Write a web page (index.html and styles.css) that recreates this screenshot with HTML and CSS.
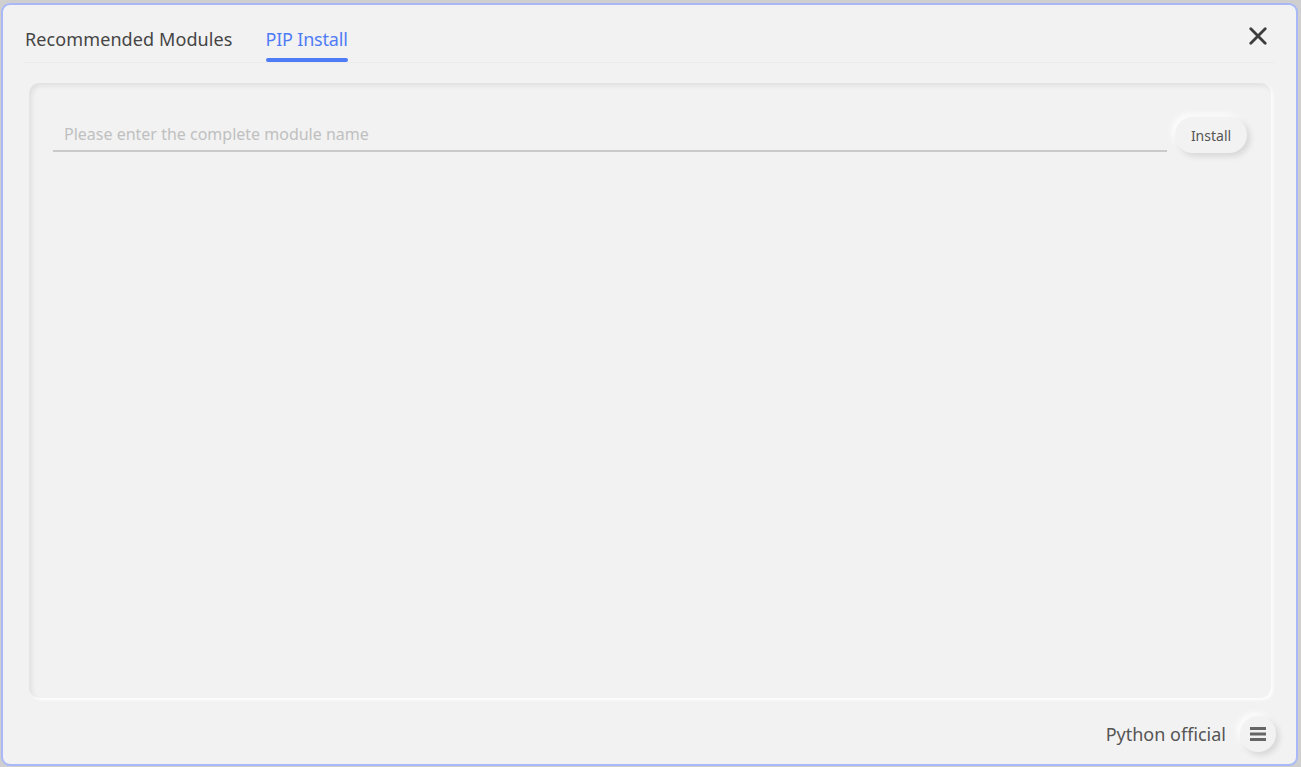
FILE: index.html
```html
<!DOCTYPE html>
<html lang="en">
<head>
    <meta charset="UTF-8">
    <meta name="viewport" content="width=device-width, initial-scale=1.0">
    <title>Module Manager</title>
    <link rel="stylesheet" href="styles.css">
</head>
<body>
    <div class="dialog">
        <header class="tabBar">
            <nav class="tabs">
                <a class="tab">Recommended Modules</a>
                <a class="tab active">PIP Install</a>
            </nav>
            <button class="closeBtn" title="Close">
                <svg width="18" height="18" viewBox="0 0 18 18">
                    <path d="M1.8 1.8 L16.2 16.2 M16.2 1.8 L1.8 16.2" stroke="#3d3d3d" stroke-width="2.8" stroke-linecap="round"/>
                </svg>
            </button>
        </header>

        <section class="panel">
            <div class="installRow">
                <input class="moduleInput" type="text" placeholder="Please enter the complete module name">
                <button class="installBtn">Install</button>
            </div>
        </section>

        <footer class="footer">
            <span class="source">Python official</span>
            <button class="menuBtn" title="Source">
                <svg width="16" height="14" viewBox="0 0 16 14">
                    <rect x="0" y="0" width="16" height="3" fill="#666"/>
                    <rect x="0" y="5.5" width="16" height="3" fill="#666"/>
                    <rect x="0" y="11" width="16" height="3" fill="#666"/>
                </svg>
            </button>
        </footer>
    </div>
</body>
</html>
```

FILE: styles.css
```css
* {
    box-sizing: border-box;
    font-family: "Noto Sans", "Open Sans", sans-serif;
}
body {
    margin: 0;
    background: #cfcfcf;
    height: 767px;
    padding: 3px 3px 1px 1px;
}
.dialog {
    height: 100%;
    background: #f2f2f2;
    border: 2px solid #a9b9f8;
    border-radius: 9px;
    display: flex;
    flex-direction: column;
    padding: 0 21px 0 22px;
}
.tabBar {
    display: flex;
    align-items: flex-start;
    justify-content: space-between;
    border-bottom: 1px solid #ebebeb;
    height: 58px;
}
.tabs {
    display: flex;
    gap: 33px;
    padding-top: 21px;
}
.tab {
    font-size: 18px;
    color: #454545;
    line-height: 26px;
    padding-bottom: 6px;
    position: relative;
    cursor: pointer;
    letter-spacing: 0.1px;
}
.tab.active {
    color: #4f7cf6;
    letter-spacing: -0.2px;
}
.tab.active::after {
    content: "";
    position: absolute;
    left: 0;
    right: 0;
    bottom: -4px;
    height: 4px;
    border-radius: 2px;
    background: #4f7cf6;
}
.closeBtn {
    border: none;
    background: none;
    padding: 0;
    margin-top: 22px;
    margin-right: 8px;
    cursor: pointer;
}
.panel {
    flex: 1;
    margin: 20px 4px 0 4px;
    border-radius: 10px;
    background: #f2f2f2;
    box-shadow: inset 3px 3px 5px rgba(0, 0, 0, 0.07), 2px 2px 3px rgba(255, 255, 255, 0.9);
    padding: 34px 24px 0 24px;
}
.installRow {
    display: flex;
    align-items: flex-end;
    gap: 8px;
}
.moduleInput {
    flex: 1;
    border: none;
    border-bottom: 2px solid #cacaca;
    background: transparent;
    font-size: 16px;
    padding: 0 11px 1px 11px;
    height: 34px;
    outline: none;
    color: #444;
}
.moduleInput::placeholder {
    color: #c0c0c0;
}
.installBtn {
    width: 72px;
    height: 36px;
    border: none;
    border-radius: 18px;
    background: #f2f2f2;
    font-size: 14px;
    color: #555;
    box-shadow: 3px 3px 6px rgba(0, 0, 0, 0.12), -3px -3px 6px rgba(255, 255, 255, 0.9);
    margin-bottom: -1px;
    cursor: pointer;
}
.footer {
    height: 66px;
    display: flex;
    align-items: center;
    justify-content: flex-end;
    gap: 14px;
    padding-top: 5px;
    margin-right: -1px;
}
.source {
    font-size: 18px;
    color: #555;
}
.menuBtn {
    width: 36px;
    height: 36px;
    border: none;
    border-radius: 50%;
    background: #f2f2f2;
    display: flex;
    align-items: center;
    justify-content: center;
    box-shadow: 3px 3px 6px rgba(0, 0, 0, 0.12), -3px -3px 6px rgba(255, 255, 255, 0.9);
    cursor: pointer;
}
```
